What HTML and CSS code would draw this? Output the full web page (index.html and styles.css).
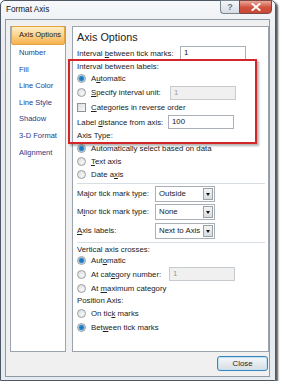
FILE: index.html
```html
<!DOCTYPE html>
<html>
<head>
    <title>Format Axis</title>
    <link rel="stylesheet" href="styles.css">
</head>
<body>
    <div class="window">
        <div class="titlebar">
            <span class="title">Format Axis</span>
            <div class="caption-buttons">
                <span class="btn-help">?</span>
                <span class="btn-close">
                    <svg width="10" height="8" viewBox="0 0 10 8"><path d="M1.5 1 L8.5 7 M8.5 1 L1.5 7" stroke="#fff" stroke-width="2" stroke-linecap="square"/></svg>
                </span>
            </div>
        </div>
        <div class="client">
            <div class="main">
                <ul class="nav">
                    <li class="active">Axis Options</li>
                    <li>Number</li>
                    <li>Fill</li>
                    <li>Line Color</li>
                    <li>Line Style</li>
                    <li>Shadow</li>
                    <li>3-D Format</li>
                    <li>Alignment</li>
                </ul>
                <div class="panel">
                    <div class="heading">Axis Options</div>
                    <div class="row r14"><span class="label w-ticks">Interval <u>b</u>etween tick marks:</span><span class="input">1</span></div>
                    <div class="row r12"><span>Interval between labels:</span></div>
                    <div class="row r13"><span class="radio on"></span><span>A<u>u</u>tomatic</span></div>
                    <div class="row r15"><span class="radio"></span><span class="label w-spec"><u>S</u>pecify interval unit:</span><span class="input disabled">1</span></div>
                    <div class="row r15"><span class="check"></span><span><u>C</u>ategories in reverse order</span></div>
                    <div class="row r14"><span class="label w-dist">Label <u>d</u>istance from axis:</span><span class="input">100</span></div>
                    <div class="row r13"><span>Axis Type:</span></div>
                    <div class="row r13"><span class="radio on"></span><span>Automatically select based on data</span></div>
                    <div class="row r13"><span class="radio"></span><span><u>T</u>ext axis</span></div>
                    <div class="row r12"><span class="radio"></span><span>Date a<u>x</u>is</span></div>
                    <div class="sep sep-a"></div>
                    <div class="row r17"><span class="label w-drop">Ma<u>j</u>or tick mark type:</span><span class="select">Outside<span class="arrow"></span></span></div>
                    <div class="row r19"><span class="label w-drop">M<u>i</u>nor tick mark type:</span><span class="select">None<span class="arrow"></span></span></div>
                    <div class="row r19"><span class="label w-drop"><u>A</u>xis labels:</span><span class="select">Next to Axis<span class="arrow"></span></span></div>
                    <div class="sep sep-b"></div>
                    <div class="row r10"><span>Vertical axis crosses:</span></div>
                    <div class="row r12"><span class="radio on"></span><span>Aut<u>o</u>matic</span></div>
                    <div class="row r16"><span class="radio"></span><span class="label w-cat">At cat<u>e</u>gory number:</span><span class="input disabled">1</span></div>
                    <div class="row r13"><span class="radio"></span><span>At <u>m</u>aximum category</span></div>
                    <div class="row r11"><span>Position Axis:</span></div>
                    <div class="row r14"><span class="radio"></span><span>On tic<u>k</u> marks</span></div>
                    <div class="row r14"><span class="radio on"></span><span>Bet<u>w</u>een tick marks</span></div>
                </div>
            </div>
            <div class="footer">
                <button class="close-button">Close</button>
            </div>
        </div>
        <div class="callout"></div>
    </div>
</body>
</html>
```

FILE: styles.css
```css
body {
    margin: 0;
    background: #fff;
    font-family: "Liberation Sans", Arial, sans-serif;
}
.window {
    position: relative;
    box-sizing: border-box;
    width: 276px;
    height: 381px;
    border: 1px solid #4e5864;
    border-radius: 5px 5px 0 0;
    background: linear-gradient(#f6f8fa, #e8ecf1 40px, #e6ebf0);
    box-shadow: 2px 2px 2px rgba(0, 0, 0, 0.65);
    padding: 0 5px 3px 4px;
    display: flex;
    flex-direction: column;
}
.titlebar {
    height: 18px;
    display: flex;
    align-items: flex-start;
}
.title {
    font-size: 8.2px;
    color: #111;
    margin: 4px 0 0 1px;
}
.caption-buttons {
    margin-left: auto;
    margin-right: -2px;
    margin-top: -1px;
    display: flex;
}
.btn-help {
    width: 19px;
    height: 14px;
    box-sizing: border-box;
    border: 1px solid #7a8590;
    border-right: none;
    border-radius: 0 0 0 4px;
    background: linear-gradient(#f4f6f8, #d7dde4);
    color: #6a7480;
    font-size: 9px;
    font-weight: bold;
    text-align: center;
    line-height: 13px;
}
.btn-close {
    width: 33px;
    height: 14px;
    box-sizing: border-box;
    border: 1px solid #7a4a44;
    border-radius: 0 0 4px 0;
    background: linear-gradient(#e9a89a, #d2503c 55%, #c84a36);
    display: flex;
    align-items: center;
    justify-content: center;
}
.client {
    flex: 1;
    background: #f0f0f0;
    border: 1px solid #8e9aa6;
    display: flex;
    flex-direction: column;
}
.main {
    display: flex;
    padding: 6px 0 0 4px;
    height: 326px;
}
.nav {
    list-style: none;
    margin: 0;
    padding: 0;
    width: 56px;
    box-sizing: border-box;
    border: 1px solid #9ba4ad;
    background: #fff;
}
.nav li {
    height: 16.6px;
    line-height: 16.6px;
    padding-left: 8px;
    font-size: 7.5px;
    color: #1d3c8f;
}
.nav li.active {
    margin: -1px 0 0;
    height: 17px;
    padding-left: 7px;
    border: 1px solid #e2a23e;
    border-radius: 2px;
    background: linear-gradient(#fdeec8, #fbd28a 50%, #f7b24e);
    color: #222;
}
.panel {
    margin-left: 6px;
    width: 197px;
    box-sizing: border-box;
    border: 1px solid #9ba4ad;
    background: #fff;
    padding: 1px 0 0 4px;
    font-size: 7.8px;
    color: #222;
}
.heading {
    height: 18px;
    line-height: 18px;
    font-size: 10.8px;
    color: #222;
}
.row {
    display: flex;
    align-items: center;
    white-space: nowrap;
}
.r10 { height: 10px; }
.r11 { height: 11px; }
.r12 { height: 12px; }
.r13 { height: 13px; }
.r14 { height: 14px; }
.r15 { height: 15px; }
.r16 { height: 16px; }
.r17 { height: 17px; }
.r19 { height: 19px; }
.label {
    flex: none;
}
.w-ticks { width: 103px; }
.w-spec { width: 79px; }
.w-dist { width: 91px; }
.w-drop { width: 78px; }
.w-cat { width: 78px; }
.input {
    box-sizing: border-box;
    width: 66px;
    height: 14px;
    line-height: 12px;
    border: 1px solid #a9b0b8;
    background: #fff;
    padding-left: 3px;
    color: #222;
}
.input.disabled {
    background: #f0f0f0;
    border-color: #c6cbd0;
    color: #9a9a9a;
}
.radio {
    flex: none;
    box-sizing: border-box;
    width: 9px;
    height: 9px;
    margin: 0 5px 0 0;
    border: 1px solid #9a9ea3;
    border-radius: 50%;
    background: radial-gradient(circle at 60% 65%, #f8f8f8, #d6d8da);
}
.radio.on {
    background: radial-gradient(circle at 50% 50%, #1a6fb4 0, #2a86c8 2px, #8fc6ea 3px, #eef2f4 3.5px, #d6d8da);
}
.check {
    flex: none;
    box-sizing: border-box;
    width: 9px;
    height: 9px;
    margin: 0 5px 0 0;
    border: 1px solid #8f9397;
    background: linear-gradient(135deg, #dcdedf, #f8f8f8);
}
.select {
    position: relative;
    box-sizing: border-box;
    width: 60px;
    height: 16px;
    line-height: 14px;
    border: 1px solid #a9b0b8;
    background: #fff;
    padding-left: 3px;
}
.arrow {
    position: absolute;
    right: 1px;
    top: 1px;
    width: 10px;
    height: 12px;
    box-sizing: border-box;
    border: 1px solid #9aa2aa;
    background: linear-gradient(#f4f4f4, #d8dcdf);
}
.arrow::after {
    content: "";
    position: absolute;
    left: 2px;
    top: 4px;
    border-left: 2.5px solid transparent;
    border-right: 2.5px solid transparent;
    border-top: 3px solid #111;
}
.sep {
    height: 1px;
    background: #d6dde3;
    margin-right: 3px;
}
.sep-a { margin-top: 3px; margin-bottom: 1px; }
.sep-b { margin-top: 2px; margin-bottom: 1px; }
.footer {
    display: flex;
    justify-content: flex-end;
    padding: 4px 1px 0 0;
}
.close-button {
    width: 51px;
    height: 15px;
    padding: 0;
    border: 1px solid #3c84b8;
    border-radius: 3px;
    background: linear-gradient(#f6f8fa, #e6eaee 50%, #d8dde2);
    box-shadow: inset 0 0 0 1px #bfe2f6;
    font-family: "Liberation Sans", Arial, sans-serif;
    font-size: 7.8px;
    color: #222;
}
.callout {
    position: absolute;
    left: 67px;
    top: 58px;
    width: 189px;
    height: 85px;
    box-sizing: border-box;
    border: 2px solid #d3262b;
    box-shadow: 2px 2px 2px rgba(0, 0, 0, 0.3);
}
```
